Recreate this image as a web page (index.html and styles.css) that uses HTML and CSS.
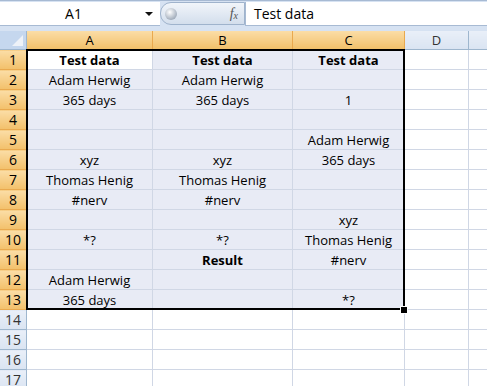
FILE: index.html
```html
<!DOCTYPE html>
<html lang="en">
<head>
  <meta charset="UTF-8" />
  <title>Test data</title>
  <link rel="stylesheet" href="styles.css">
</head>
<body>
  <div class="formula-bar">
    <div class="name-box">
      <span class="cell-ref">A1</span>
      <span class="drop"></span>
    </div>
    <div class="fx-pill">
      <span class="ball"></span>
      <span class="fx">f<sub>x</sub></span>
    </div>
    <div class="formula-input">Test data</div>
  </div>

  <div class="sheet">
    <table class="grid">
      <tr class="head">
        <th class="corner"><span class="tri"></span></th>
        <th class="sel">A</th>
        <th class="sel">B</th>
        <th class="sel">C</th>
        <th>D</th>
        <th class="last"></th>
      </tr>
      <tr>
        <th class="sel">1</th>
        <td class="active b">Test data</td><td class="s b">Test data</td><td class="s b">Test data</td><td></td><td></td>
      </tr>
      <tr>
        <th class="sel">2</th>
        <td class="s">Adam Herwig</td><td class="s">Adam Herwig</td><td class="s"></td><td></td><td></td>
      </tr>
      <tr>
        <th class="sel">3</th>
        <td class="s">365 days</td><td class="s">365 days</td><td class="s">1</td><td></td><td></td>
      </tr>
      <tr>
        <th class="sel">4</th>
        <td class="s"></td><td class="s"></td><td class="s"></td><td></td><td></td>
      </tr>
      <tr>
        <th class="sel">5</th>
        <td class="s"></td><td class="s"></td><td class="s">Adam Herwig</td><td></td><td></td>
      </tr>
      <tr>
        <th class="sel">6</th>
        <td class="s">xyz</td><td class="s">xyz</td><td class="s">365 days</td><td></td><td></td>
      </tr>
      <tr>
        <th class="sel">7</th>
        <td class="s">Thomas Henig</td><td class="s">Thomas Henig</td><td class="s"></td><td></td><td></td>
      </tr>
      <tr>
        <th class="sel">8</th>
        <td class="s">#nerv</td><td class="s">#nerv</td><td class="s"></td><td></td><td></td>
      </tr>
      <tr>
        <th class="sel">9</th>
        <td class="s"></td><td class="s"></td><td class="s">xyz</td><td></td><td></td>
      </tr>
      <tr>
        <th class="sel">10</th>
        <td class="s">*?</td><td class="s">*?</td><td class="s">Thomas Henig</td><td></td><td></td>
      </tr>
      <tr>
        <th class="sel">11</th>
        <td class="s"></td><td class="s b">Result</td><td class="s">#nerv</td><td></td><td></td>
      </tr>
      <tr>
        <th class="sel">12</th>
        <td class="s">Adam Herwig</td><td class="s"></td><td class="s"></td><td></td><td></td>
      </tr>
      <tr>
        <th class="sel">13</th>
        <td class="s">365 days</td><td class="s"></td><td class="s">*?</td><td></td><td></td>
      </tr>
      <tr><th>14</th><td></td><td></td><td></td><td></td><td></td></tr>
      <tr><th>15</th><td></td><td></td><td></td><td></td><td></td></tr>
      <tr><th>16</th><td></td><td></td><td></td><td></td><td></td></tr>
      <tr><th>17</th><td></td><td></td><td></td><td></td><td></td></tr>
    </table>
    <div class="selection"></div>
    <div class="handle"></div>
  </div>
</body>
</html>
```

FILE: styles.css
```css
body {
  margin: 0;
  background: #fff;
  font-family: "Open Sans", "Noto Sans", sans-serif;
  font-size: 13px;
  color: #000;
  overflow: hidden;
}

.formula-bar {
  height: 31px;
  box-sizing: border-box;
  background: #d6e2f2;
  border-top: 1px solid #a7bad3;
  display: flex;
  align-items: flex-start;
}

.name-box {
  width: 160px;
  height: 23px;
  margin-top: 1px;
  background: #fff;
  border-bottom: 1px solid #a7bad3;
  display: flex;
  align-items: center;
}

.cell-ref {
  flex: 1;
  text-align: center;
  font-size: 14px;
  padding-left: 6px;
}

.drop {
  width: 0;
  height: 0;
  border-left: 4px solid transparent;
  border-right: 4px solid transparent;
  border-top: 4px solid #111;
  margin: 1px 7px 0 4px;
}

.fx-pill {
  width: 85px;
  height: 23px;
  margin-top: 1px;
  box-sizing: border-box;
  border: 1px solid #9fb3cc;
  border-radius: 11px 0 0 11px;
  background: linear-gradient(#f1f5fa, #d3deec);
  display: flex;
  align-items: center;
  justify-content: space-between;
  padding: 0 6px 0 4px;
}

.ball {
  width: 12px;
  height: 12px;
  border-radius: 50%;
  background: radial-gradient(circle at 40% 35%, #fff, #a4afbd 70%);
}

.fx {
  font-family: "Liberation Serif", serif;
  font-style: italic;
  font-size: 14px;
  color: #555;
}

.fx sub {
  font-size: 10px;
  vertical-align: -1px;
}

.formula-input {
  flex: 1;
  height: 23px;
  margin-top: 1px;
  background: #fff;
  border-left: 1px solid #a7bad3;
  border-bottom: 1px solid #a7bad3;
  padding-left: 8px;
  line-height: 23px;
  font-size: 14px;
}

.sheet {
  position: relative;
}

.grid {
  border-collapse: collapse;
  table-layout: fixed;
  width: 500px;
}

.grid th,
.grid td {
  height: 19px;
  padding: 0;
  border: 1px solid #d0d7e5;
  text-align: center;
  white-space: nowrap;
  overflow: hidden;
}

.grid td {
  font-size: 13px;
}

.grid th {
  font-weight: normal;
  background: linear-gradient(#e9eff8, #dae4f2);
  border-color: #9eb6ce;
  color: #333;
  font-size: 14px;
}

.grid tr:first-child th,
.grid tr:first-child td {
  border-top: none;
}

.grid tr > :first-child {
  border-left: none;
  width: 26px;
}

.head th {
  height: 17px;
  font-size: 13px;
}

.head th:nth-child(2) { width: 125px; }
.head th:nth-child(3) { width: 139px; }
.head th:nth-child(4) { width: 111px; }
.head th:nth-child(5) { width: 63px; }

.grid th.sel {
  background: linear-gradient(#fbdda6, #f2c06a);
  border-color: #e9a94e;
  color: #000;
}

.grid th.corner {
  background: #c5d7ee;
  position: relative;
}

.tri {
  position: absolute;
  right: 3px;
  bottom: 3px;
  width: 0;
  height: 0;
  border-left: 11px solid transparent;
  border-bottom: 11px solid #eef2f8;
}

.grid td.s {
  background: #e8ebf5;
}

.grid td.active {
  background: #fff;
}

.grid td.b {
  font-weight: bold;
}

.selection {
  position: absolute;
  left: 26px;
  top: 18px;
  width: 375px;
  height: 257px;
  border: 2px solid #000;
  pointer-events: none;
}

.handle {
  position: absolute;
  left: 400px;
  top: 275px;
  width: 6px;
  height: 6px;
  background: #000;
  border: 1px solid #fff;
}
```
